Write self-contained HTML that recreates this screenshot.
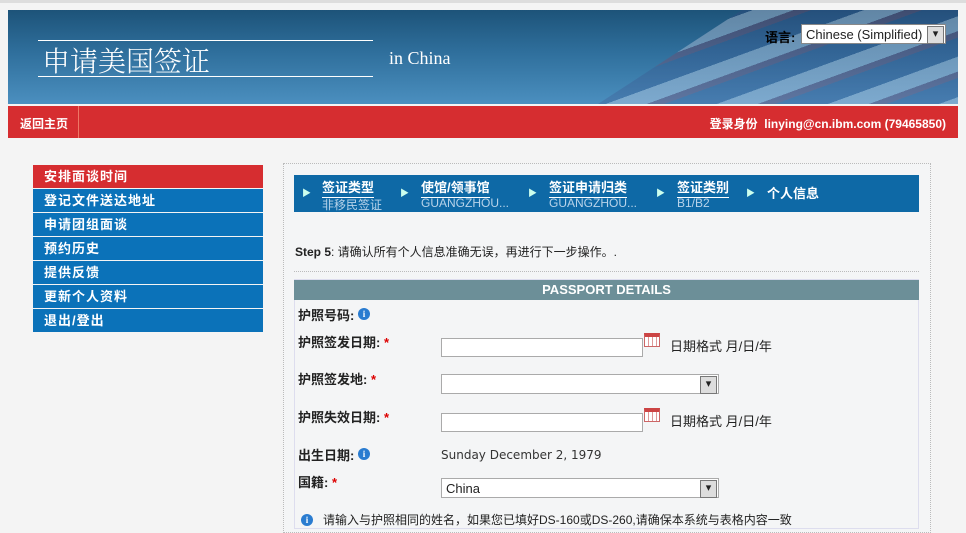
<!DOCTYPE html>
<html><head><meta charset="utf-8"><style>
*{margin:0;padding:0;box-sizing:border-box}
body{width:966px;height:523px;overflow:hidden;background:#f4f4f4;font-family:"Liberation Sans","Noto Sans CJK SC",sans-serif;font-size:12px;color:#222;position:relative}
.abs{position:absolute}
.banner{left:8px;top:10px;width:950px;height:94px;background:linear-gradient(180deg,#1d5379 0%,#2f6f9c 45%,#4b8fbf 100%);overflow:hidden}
.flag{right:0;top:0;width:480px;height:94px;background:
repeating-linear-gradient(160deg,rgba(60,70,130,.25) 0 18px,rgba(200,210,230,.4) 18px 32px,rgba(140,60,90,.3) 32px 38px);clip-path:polygon(25% 100%,55% 0,100% 0,100% 100%)}
.red{left:8px;top:106px;width:950px;height:32px;background:#d62d30;color:#fff;font-weight:bold;font-size:12px}
.side div{height:23px;margin-bottom:1px;background:#0b72b9;color:#fff;font-weight:bold;font-size:13px;line-height:23px;padding-left:11px;letter-spacing:1px}
.content{left:283px;top:163px;width:648px;height:370px;border:1px dotted #bbb;background:#f4f5f6}
.crumb{left:294px;top:175px;width:625px;height:37px;background:#0e69a6;color:#fff}
.crumb .t{position:absolute;top:2px;font-weight:bold;font-size:13px;border-bottom:1px solid #fff;padding-bottom:1px}
.crumb .s{position:absolute;top:21px;font-size:12px;color:#b7d3ea}
.crumb .a{position:absolute;top:11px;font-size:9px;color:#cfe}
.lbl{font-weight:bold;font-size:13px}
.star{color:#d00}
.inp{background:#fff;border:1px solid #aaa;height:19px}
.sel{background:#fff;border:1px solid #aaa;height:20px}
.sel:after{content:"▾";position:absolute;right:1px;top:1px;width:15px;height:16px;background:#ddd;border:1px solid #777;font-size:11px;text-align:center;line-height:14px}
.info{width:12px;height:12px;border-radius:50%;background:#2a7cd0;color:#fff;font-size:9px;font-weight:bold;text-align:center;line-height:12px;font-family:"Liberation Serif",serif}
.cal{width:16px;height:14px;border:1px solid #c66;background:repeating-linear-gradient(90deg,#fff 0 3px,#d99 3px 4px);border-top:4px solid #c44}
</style></head><body>
<div class="abs" style="left:0;top:0;width:966px;height:3px;background:#ddd"></div>
<div class="abs banner">
 <div class="abs flag"></div>
 <div class="abs" style="left:30px;top:30px;width:335px;border-top:1px solid #fff"></div>
 <div class="abs" style="left:30px;top:66px;width:335px;border-top:1px solid #fff"></div>
 <div class="abs" style="left:34px;top:30px;color:#fff;font-size:28px;font-family:'Noto Serif CJK SC',serif;font-weight:300">申请美国签证</div>
 <div class="abs" style="left:381px;top:38px;color:#fff;font-size:18px;font-family:'Liberation Serif',serif">in China</div>
 <div class="abs" style="left:757px;top:17px;color:#000;font-size:13px;font-weight:bold">语言:</div>
 <div class="abs sel" style="left:793px;top:14px;width:145px;height:20px;font-size:13px;padding:2px 4px;border-color:#888">Chinese (Simplified)</div>
</div>
<div class="abs red">
 <div class="abs" style="left:12px;top:9px">返回主页</div>
 <div class="abs" style="left:70px;top:0;height:32px;border-left:1px solid #e76"></div>
 <div class="abs" style="right:12px;top:9px">登录身份 &nbsp;linying@cn.ibm.com (79465850)</div>
</div>
<div class="abs side" style="left:33px;top:165px;width:230px">
 <div style="background:#d62d30">安排面谈时间</div><div>登记文件送达地址</div><div>申请团组面谈</div><div>预约历史</div><div>提供反馈</div><div>更新个人资料</div><div>退出/登出</div>
</div>
<div class="abs content"></div>
<div class="abs crumb">
 <span class="a" style="left:8px">▶</span><span class="t" style="left:28px">签证类型</span><span class="s" style="left:28px">非移民签证</span>
 <span class="a" style="left:106px">▶</span><span class="t" style="left:127px">使馆/领事馆</span><span class="s" style="left:127px">GUANGZHOU...</span>
 <span class="a" style="left:234px">▶</span><span class="t" style="left:255px">签证申请归类</span><span class="s" style="left:255px">GUANGZHOU...</span>
 <span class="a" style="left:362px">▶</span><span class="t" style="left:383px">签证类别</span><span class="s" style="left:383px">B1/B2</span>
 <span class="a" style="left:452px">▶</span><span class="t" style="left:473px;border:none;top:8px">个人信息</span>
</div>
<div class="abs" style="left:295px;top:243px;font-size:12px"><b>Step 5</b>: 请确认所有个人信息准确无误，再进行下一步操作。.</div>
<div class="abs" style="left:294px;top:271px;width:625px;border-top:1px dotted #bbb"></div>
<div class="abs" style="left:294px;top:279px;width:625px;height:250px;border:1px solid #dde;background:#f4f5f6"></div>
<div class="abs" style="left:294px;top:280px;width:625px;height:20px;background:#6c8f98;color:#fff;font-weight:bold;font-size:13px;text-align:center;line-height:20px">PASSPORT DETAILS</div>
<div class="abs lbl" style="left:298px;top:305px">护照号码:</div><div class="abs info" style="left:358px;top:308px">i</div>
<div class="abs lbl" style="left:298px;top:332px">护照签发日期: <span class="star">*</span></div>
<div class="abs inp" style="left:441px;top:338px;width:202px"></div>
<div class="abs cal" style="left:644px;top:333px"></div>
<div class="abs" style="left:670px;top:336px;font-size:13px">日期格式 月/日/年</div>
<div class="abs lbl" style="left:298px;top:369px">护照签发地: <span class="star">*</span></div>
<div class="abs sel" style="left:441px;top:374px;width:278px"></div>
<div class="abs lbl" style="left:298px;top:407px">护照失效日期: <span class="star">*</span></div>
<div class="abs inp" style="left:441px;top:413px;width:202px"></div>
<div class="abs cal" style="left:644px;top:408px"></div>
<div class="abs" style="left:670px;top:411px;font-size:13px">日期格式 月/日/年</div>
<div class="abs lbl" style="left:298px;top:445px">出生日期:</div><div class="abs info" style="left:358px;top:448px">i</div>
<div class="abs" style="left:441px;top:448px;font-size:12px;color:#333;font-family:'DejaVu Sans',sans-serif">Sunday December 2, 1979</div>
<div class="abs lbl" style="left:298px;top:472px">国籍: <span class="star">*</span></div>
<div class="abs sel" style="left:441px;top:478px;width:278px;font-size:13px;padding:2px 4px">China</div>
<div class="abs info" style="left:301px;top:514px">i</div>
<div class="abs" style="left:323px;top:511px;font-size:12px">请输入与护照相同的姓名，如果您已填好DS-160或DS-260,请确保本系统与表格内容一致</div>
</body></html>
